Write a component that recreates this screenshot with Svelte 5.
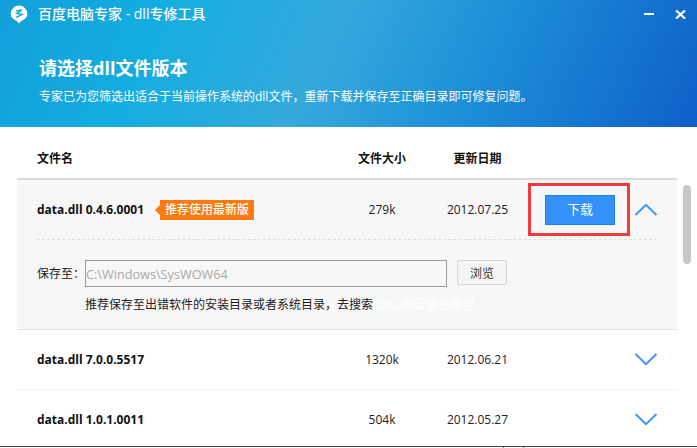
<script lang="ts">
	const files = [
		{ name: 'data.dll 0.4.6.0001', size: '279k', date: '2012.07.25', open: true },
		{ name: 'data.dll 7.0.0.5517', size: '1320k', date: '2012.06.21', open: false },
		{ name: 'data.dll 1.0.1.0011', size: '504k', date: '2012.05.27', open: false }
	];
</script>

<div class="window">
	<header class="banner">
		<div class="titlebar">
			<svg class="logo" viewBox="0 0 18 19" width="18" height="19">
				<path d="M9 0.5a8.300 8.300 0 0 1 8.300 8.300c0 3.400-2 5.400-4.200 6.200-1.500 .6-2.500 1.800-4.100 3.500-1.600-1.700-2.600-2.900-4.100-3.500C2.700 14.200.7 12.200.7 8.800A8.300 8.300 0 0 1 9 .5z" fill="#fff" />
				<path d="M5.800 6 12 5 6.800 8.600l5.400 .8-6 3" fill="none" stroke="#18a5dc" stroke-width="1.400" />
			</svg>
			<span class="app-name">百度电脑专家 - dll专修工具</span>
			<div class="win-buttons">
				<span class="minimize"></span>
				<svg class="close" viewBox="0 0 11 9" width="11" height="9">
					<path d="M1 .5l9 8M10 .5l-9 8" stroke="#fff" stroke-width="2.200" fill="none" />
				</svg>
			</div>
		</div>
		<h1>请选择dll文件版本</h1>
		<p>专家已为您筛选出适合于当前操作系统的dll文件，重新下载并保存至正确目录即可修复问题。</p>
	</header>

	<main class="content">
		<div class="list">
			<div class="cols head">
				<span>文件名</span>
				<span class="center">文件大小</span>
				<span class="center">更新日期</span>
			</div>

			{#each files as file, i (file.name)}
				<section class="file" class:open={file.open} class:last={i === files.length - 1}>
					<div class="cols row">
						<div class="name">
							<strong>{file.name}</strong>
							{#if file.open}
								<span class="badge">推荐使用最新版</span>
							{/if}
						</div>
						<span class="center">{file.size}</span>
						<span class="center">{file.date}</span>
						<div class="action">
							{#if file.open}
								<button class="download">下载</button>
								<span class="highlight"></span>
							{/if}
						</div>
						<svg class="chevron" viewBox="0 0 24 13" width="24" height="13">
							<path d={file.open ? 'M1.500 12 12 1.800 22.500 12' : 'M1.500 1 12 11.200 22.500 1'} fill="none" stroke="#3f96f5" stroke-width="2" />
						</svg>
					</div>
					{#if file.open}
						<div class="details">
							<div class="save-row">
								<span class="save-label">保存至：</span>
								<input class="path" value="C:\Windows\SysWOW64" readonly />
								<button class="browse">浏览</button>
							</div>
							<p class="hint">推荐保存至出错软件的安装目录或者系统目录，去搜索<span class="hint-link">data.dll安装在哪里</span></p>
						</div>
					{/if}
				</section>
			{/each}
		</div>
		<div class="scrollbar"></div>
	</main>

	<footer class="edge">
		<span class="tick"></span>
		<span class="tick"></span>
	</footer>
</div>

<style>
	:global(body) {
		margin: 0;
		background: #fff;
	}

	.window {
		width: 697px;
		height: 448px;
		display: flex;
		flex-direction: column;
		overflow: hidden;
		font-family: 'Open Sans', 'Noto Sans CJK SC', sans-serif;
		font-size: 12px;
		color: #222;
	}

	.banner {
		height: 127px;
		flex: none;
		box-sizing: border-box;
		padding: 5px 0 0 10px;
		color: #fff;
		background: linear-gradient(114deg, #129fdb 0%, #14ade0 22%, #35a9dc 46%, #1c8fd8 68%, #0f5fc9 100%);
	}

	.titlebar {
		display: flex;
		align-items: center;
		height: 19px;
	}

	.logo {
		flex: none;
	}

	.app-name {
		margin-left: 10px;
		font-size: 14px;
		line-height: 18px;
		margin-top: -1px;
		font-weight: 500;
	}

	.win-buttons {
		margin-left: auto;
		width: 53px;
		display: flex;
		align-items: center;
		gap: 21px;
		height: 19px;
		margin-top: -1px;
	}

	.minimize {
		width: 10px;
		height: 2px;
		background: #fff;
	}

	.close {
		flex: none;
	}

	h1 {
		margin: 31px 0 0 29px;
		font-size: 18px;
		line-height: 26px;
		font-weight: 700;
	}

	.banner p {
		margin: 7px 0 0 29px;
		font-size: 12px;
		line-height: 18px;
	}

	.content {
		flex: 1;
		min-height: 0;
		display: flex;
		padding-left: 17px;
	}

	.list {
		width: 660px;
		flex: none;
	}

	.cols {
		display: grid;
		grid-template-columns: 305px 80px 111px 94px 38px;
		align-items: center;
		padding-left: 20px;
	}

	.center {
		text-align: center;
	}

	.head {
		height: 53px;
		box-sizing: border-box;
		padding-top: 11px;
		font-weight: 700;
		border-bottom: 2px solid #dcdcdc;
		color: #111;
	}

	.file {
		border-bottom: 1px solid #f1f1f1;
	}

	.file.open {
		background: #f7f7f7;
		border-bottom: 1px solid #e2e2e2;
	}

	.file.last {
		border-bottom: none;
	}

	.row {
		height: 59px;
	}

	.name {
		display: flex;
		align-items: center;
		color: #111;
	}

	.name strong {
		font-weight: 700;
	}

	.badge {
		position: relative;
		margin-left: 16px;
		height: 20px;
		line-height: 20px;
		padding: 0 5px;
		background: #ff7a0c;
		color: #fff;
		font-weight: 500;
	}

	.badge::before {
		content: '';
		position: absolute;
		left: -5px;
		top: 5px;
		border-style: solid;
		border-width: 5px 5px 5px 0;
		border-color: transparent #ff7a0c transparent transparent;
	}

	.action {
		position: relative;
		display: flex;
		justify-content: center;
		align-items: center;
	}

	.download {
		width: 70px;
		height: 30px;
		box-sizing: border-box;
		border: 1px solid #1f7fec;
		background: #3592fb;
		color: #fff;
		font: inherit;
		font-size: 13px;
		line-height: 26px;
		padding: 0 0 2px;
	}

	/* red annotation box drawn over the button */
	.highlight {
		position: absolute;
		left: -5px;
		top: -12px;
		width: 102px;
		height: 53px;
		box-sizing: border-box;
		border: 3px solid #f03a3e;
	}

	.chevron {
		justify-self: center;
		margin-top: -1px;
	}

	.details {
		height: 90px;
		box-sizing: border-box;
		margin: 0 20px 0 20px;
		border-top: 1px dashed #dddddd;
		padding-top: 20px;
	}

	.save-row {
		display: flex;
		align-items: flex-start;
	}

	.save-label {
		width: 48px;
		line-height: 27px;
		flex: none;
		color: #222;
	}

	.path {
		width: 362px;
		height: 27px;
		box-sizing: border-box;
		border: 1px solid #9a9a9a;
		background: #f7f7f7;
		padding: 0;
		font: inherit;
		font-size: 12.700px;
		color: #a8a8a8;
		outline: none;
	}

	.browse {
		margin-left: 10px;
		width: 50px;
		height: 25px;
		box-sizing: border-box;
		border: 1px solid #d4d4d4;
		border-radius: 2px;
		background: #f5f5f5;
		color: #333;
		font: inherit;
		padding: 0;
	}

	.hint {
		margin: 9px 0 0 48px;
		line-height: 18px;
		color: #222;
	}

	.hint-link {
		color: #fff;
	}

	.scrollbar {
		width: 8px;
		height: 79px;
		flex: none;
		margin: 58px 0 0 6px;
		border-radius: 4px;
		background: #c8c8c8;
	}

	.edge {
		position: relative;
		height: 2px;
		flex: none;
		box-sizing: border-box;
		border-top: 1px solid #444;
		display: flex;
		gap: 19px;
		padding-left: 503px;
	}

	.tick {
		width: 1px;
		height: 1px;
		background: #888;
	}
</style>
